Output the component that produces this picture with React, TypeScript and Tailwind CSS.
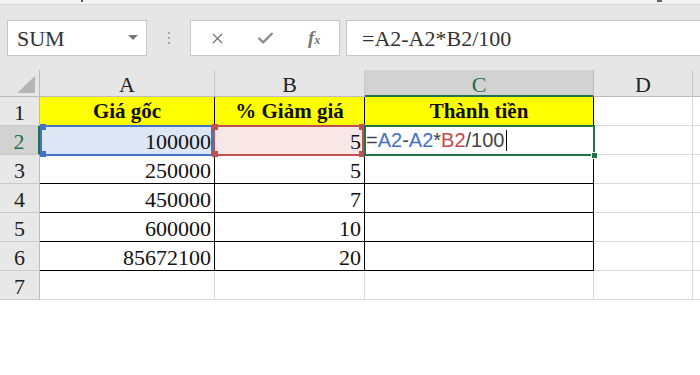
import { X, Check } from 'lucide-react';

type Row = { a: string; b: string };

const rows: Row[] = [
  { a: '100000', b: '5' },
  { a: '250000', b: '5' },
  { a: '450000', b: '7' },
  { a: '600000', b: '10' },
  { a: '85672100', b: '20' },
];

const serif = "font-['Liberation_Serif','Times_New_Roman',serif]";

function Toolbar() {
  return (
    <div className="bg-[#e6e6e6]">
      <div className="flex h-[5px] border-b border-[#d6d6d6] bg-[#f3f3f3]">
        <div className="ml-[81px] h-[2px] w-[2px] bg-[#555]" />
        <div className="ml-[574px] h-[2px] w-[5px] bg-[#666]" />
      </div>
      <div className="flex h-[65px] items-start pt-[15px]">
        {/* name box */}
        <div className="ml-[7px] flex h-[36px] w-[140px] items-center justify-between border border-[#c6c6c6] bg-white pl-[9px] pr-[8px]">
          <span className={`${serif} text-[22px] text-[#333]`}>SUM</span>
          <svg width="10" height="6" viewBox="0 0 10 6">
            <polygon points="0,0 10,0 5,5" fill="#777" />
          </svg>
        </div>
        <div className="flex h-[36px] w-[43px] flex-col items-center justify-center gap-[3px]">
          <div className="h-[2px] w-[2px] bg-[#aaa]" />
          <div className="h-[2px] w-[2px] bg-[#aaa]" />
          <div className="h-[2px] w-[2px] bg-[#aaa]" />
        </div>
        {/* cancel / enter / fx */}
        <div className="flex h-[36px] w-[150px] items-center border border-[#c6c6c6] bg-white">
          <div className="flex w-[51px] justify-center pl-[2px]">
            <X size={17} strokeWidth={1.6} color="#6e6e6e" />
          </div>
          <div className="flex w-[48px] justify-center">
            <Check size={19} strokeWidth={3} color="#8c8c8c" />
          </div>
          <div className="flex w-[50px] justify-center">
            <span className={`${serif} text-[19px] font-bold italic text-[#777]`}>
              f<span className="text-[12px]">x</span>
            </span>
          </div>
        </div>
        {/* formula bar */}
        <div className="ml-[6px] flex h-[36px] flex-1 items-center border-y border-l border-[#c6c6c6] bg-white pl-[15px]">
          <span className={`${serif} text-[22px] text-[#333]`}>=A2-A2*B2/100</span>
        </div>
      </div>
    </div>
  );
}

function ColHeader() {
  const cols = [
    { id: 'A', w: 'w-[175px]' },
    { id: 'B', w: 'w-[150px]' },
    { id: 'C', w: 'w-[229px]' },
    { id: 'D', w: 'w-[99px]' },
  ];
  return (
    <div className="flex h-[27px] bg-[#e6e6e6]">
      <div className="relative h-full w-[40px] border-r border-b border-[#bcbcbc]">
        <svg className="absolute left-0 top-0" width="40" height="27" viewBox="0 0 40 27">
          <polygon points="35,6 35,23 17,23" fill="#b5b5b5" />
        </svg>
      </div>
      {cols.map((c) =>
        c.id === 'C' ? (
          <div
            key={c.id}
            className={`${c.w} flex h-full items-center justify-center border-r border-b-2 border-r-[#bcbcbc] border-b-[#217346] bg-[#d2d2d2] pt-[3px] ${serif} text-[22px] text-[#217346]`}
          >
            {c.id}
          </div>
        ) : (
          <div
            key={c.id}
            className={`${c.w} flex h-full items-center justify-center border-r border-b border-[#c8c8c8] border-b-[#bcbcbc] pt-[2px] ${serif} text-[22px] text-[#222]`}
          >
            {c.id}
          </div>
        )
      )}
      <div className="h-full flex-1 border-b border-[#bcbcbc]" />
    </div>
  );
}

function RowHead({ n, active }: { n: number; active?: boolean }) {
  return active ? (
    <div
      className={`flex h-full w-[40px] items-center justify-center border-b border-r-2 border-b-[#c6c6c6] border-r-[#217346] bg-[#d2d2d2] pt-[2px] font-normal ${serif} text-[22px] text-[#217346]`}
    >
      {n}
    </div>
  ) : (
    <div
      className={`flex h-full w-[40px] items-center justify-center border-r border-b border-r-[#bcbcbc] border-b-[#cacaca] bg-[#e8e8e8] pt-[2px] font-normal ${serif} text-[22px] text-[#222]`}
    >
      {n}
    </div>
  );
}

function Tail() {
  return (
    <>
      <div className="h-full w-[99px] border-r border-b border-[#d9d9d9]" />
      <div className="h-full flex-1 border-b border-[#d9d9d9]" />
    </>
  );
}

function Handle({ pos, color }: { pos: string; color: string }) {
  return <div className={`absolute h-[6px] w-[6px] ${pos} ${color}`} />;
}

export default function App() {
  return (
    <div className="h-[375px] w-[700px] overflow-hidden bg-white">
      <Toolbar />
      <ColHeader />

      {/* row 1 */}
      <div className={`flex h-[29px] ${serif} text-[21px] font-bold text-[#111]`}>
        <RowHead n={1} />
        <div className="flex h-full w-[175px] items-center justify-center border-r border-b border-black bg-[#ffff00] pt-[2px]">
          Giá gốc
        </div>
        <div className="flex h-full w-[150px] items-center justify-center border-r border-b border-black bg-[#ffff00] pt-[2px]">
          % Giảm giá
        </div>
        <div className="flex h-full w-[229px] items-center justify-center border-r border-b border-black bg-[#ffff00] pt-[2px]">
          Thành tiền
        </div>
        <Tail />
      </div>

      {/* rows 2-6 */}
      {rows.map((r, i) => {
        const editing = i === 0;
        return (
          <div key={r.a} className={`flex h-[29px] ${serif} text-[22px] text-[#111]`}>
            <RowHead n={i + 2} active={editing} />
            <div
              className={`relative flex h-full w-[175px] items-center justify-end border-r border-b border-black pt-[2px] pr-[3px] ${editing ? 'bg-[#dce6f4]' : ''}`}
            >
              {r.a}
              {editing && (
                <div className="absolute -top-[1px] -bottom-[2px] left-0 right-[1px] border-2 border-[#4472c4]">
                  <Handle pos="-left-[2px] -top-[3px]" color="bg-[#4472c4]" />
                  <Handle pos="-left-[2px] -bottom-[3px]" color="bg-[#4472c4]" />
                </div>
              )}
            </div>
            <div
              className={`relative flex h-full w-[150px] items-center justify-end border-r border-b border-black pt-[2px] pr-[3px] ${editing ? 'bg-[#f9e7e7]' : ''}`}
            >
              {r.b}
              {editing && (
                <div className="absolute z-10 -top-[1px] -bottom-[2px] -left-[2px] right-0 border-2 border-[#c0504d]">
                  <Handle pos="-left-[3px] -top-[3px]" color="bg-[#c0504d]" />
                  <Handle pos="-left-[3px] -bottom-[3px]" color="bg-[#c0504d]" />
                  <Handle pos="-right-[3px] -top-[3px]" color="bg-[#c0504d]" />
                  <Handle pos="-right-[3px] -bottom-[3px]" color="bg-[#c0504d]" />
                </div>
              )}
            </div>
            <div className="relative flex h-full w-[229px] items-center border-r border-b border-black bg-white pl-[1px]">
              {editing && (
                <>
                  <span className="flex items-center font-['Liberation_Sans',Arial,sans-serif] text-[20px] text-[#444]">
                    =<span className="text-[#4472c4]">A2</span>-<span className="text-[#4472c4]">A2</span>*
                    <span className="text-[#c8484b]">B2</span>/100
                    <span className="ml-[1px] h-[21px] w-px bg-black" />
                  </span>
                  <div className="absolute z-20 -top-[1px] -bottom-[2px] -left-[1px] -right-[2px] border-2 border-[#217346]">
                    <div className="absolute -right-[5px] -bottom-[5px] h-[7px] w-[7px] border border-white bg-[#217346]" />
                  </div>
                </>
              )}
            </div>
            <Tail />
          </div>
        );
      })}

      {/* row 7 */}
      <div className="flex h-[29px]">
        <RowHead n={7} />
        <div className="h-full w-[175px] border-r border-b border-[#d9d9d9]" />
        <div className="h-full w-[150px] border-r border-b border-[#d9d9d9]" />
        <div className="h-full w-[229px] border-r border-b border-[#d9d9d9]" />
        <Tail />
      </div>
    </div>
  );
}
